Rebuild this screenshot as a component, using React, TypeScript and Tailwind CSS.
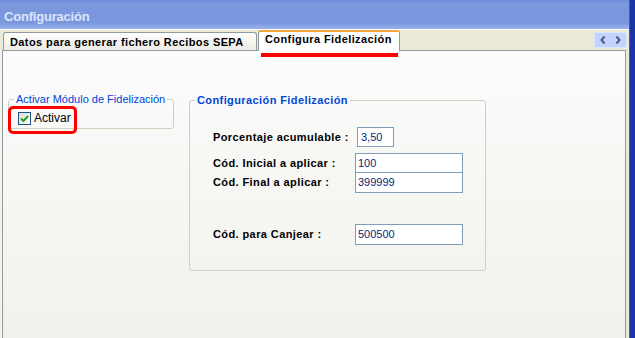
import React from "react";

const labelCls = "w-[142px] shrink-0 text-[11px] font-bold tracking-[0.4px] text-black";
const inputCls =
  "h-full border border-[#7f9db9] bg-white pl-[2px] text-[11px] leading-none text-[#0b1f7a] flex items-center";

function Chevron({ dir }: { dir: "left" | "right" }) {
  return (
    <svg width="6" height="8" viewBox="0 0 6 8" className="block">
      <polyline
        points={dir === "left" ? "4.5,0.5 1.5,4 4.5,7.5" : "1.5,0.5 4.5,4 1.5,7.5"}
        fill="none"
        stroke="#45598a"
        strokeWidth="2"
      />
    </svg>
  );
}

function CheckBox() {
  return (
    <div className="flex h-[13px] w-[13px] items-center justify-center border border-[#1c5180] bg-[linear-gradient(135deg,#dcdcd7,#ffffff)]">
      <svg width="9" height="9" viewBox="0 0 9 9">
        <polyline points="1,4.5 3.5,7 8,2" fill="none" stroke="#21a121" strokeWidth="2" />
      </svg>
    </div>
  );
}

function Row({ label, children, className }: { label: string; children: React.ReactNode; className?: string }) {
  return (
    <div className={"flex items-center " + (className ?? "")}>
      <span className={labelCls}>{label}</span>
      {children}
    </div>
  );
}

export default function App() {
  return (
    <div className="flex h-[338px] w-[635px] overflow-hidden bg-white font-['Liberation_Sans',Arial,sans-serif]">
      <div className="flex w-[629px] flex-col">
        {/* title bar */}
        <div className="h-[29px] bg-[linear-gradient(180deg,#6d8bdb_0%,#7b98de_12%,#7a97de_78%,#98b1ec_100%)] pl-[4px] pt-[9px]">
          <span className="block text-[13px] font-bold leading-[15px] tracking-[-0.2px] text-[#dbe5fa]">
            Configuración
          </span>
        </div>
        <div className="h-px bg-white" />

        {/* tab strip */}
        <div className="relative z-10 flex h-[20px] items-end bg-[#ece9d8]">
          <div className="ml-[3px] h-[18px] w-[254px] rounded-t-[3px] border border-b-0 border-[#919b9c] bg-[linear-gradient(180deg,#ffffff,#ecebe5)] pl-[6px] pt-[3px]">
            <span className="block text-[11px] font-bold leading-[13px] tracking-[0.4px] text-black">
              Datos para generar fichero Recibos SEPA
            </span>
          </div>
          <div className="-mb-px ml-px h-[21px] w-[142px] rounded-t-[3px] border-x border-t-2 border-x-[#919b9c] border-t-[#f2a53b] bg-white pl-[6px] pt-px">
            <span className="block text-[11px] font-bold leading-[13px] tracking-[0.4px] text-black">
              Configura Fidelización
            </span>
          </div>
          <div className="mb-[2px] ml-auto mr-[2px] flex h-[16px] w-[33px] self-end border border-[#dde6fd] bg-[#c3d3fb]">
            <div className="flex flex-1 items-center justify-center">
              <Chevron dir="left" />
            </div>
            <div className="flex flex-1 items-center justify-center">
              <Chevron dir="right" />
            </div>
          </div>
        </div>

        {/* body */}
        <div className="flex flex-1 bg-[#ece9d8]">
          <div className="w-[2px] bg-[#f4f3ef]" />
          <div className="relative flex w-[624px] items-start border-x border-t border-[#919b9c] bg-[linear-gradient(180deg,#fcfcfe_0%,#f7f7f4_40%,#f2f1ec_100%)]">
            <fieldset className="ml-[5px] mt-[42px] w-[166px] rounded-[3px] border border-[#d0d0bf] pb-[3px] pt-[6px]">
              <legend className="ml-[5px] px-[2px] text-[11px] leading-[13px] text-[#0046d5]">
                Activar Módulo de Fidelización
              </legend>
              <div className="ml-[9px] flex h-[13px] items-center gap-[3px]">
                <CheckBox />
                <span className="text-[12px] leading-[13px] text-black">Activar</span>
              </div>
            </fieldset>

            <fieldset className="ml-[15px] mt-[43px] w-[297px] rounded-[3px] border border-[#d0d0bf] pb-[25px] pl-[23px]">
              <legend className="ml-[-18px] px-[2px] text-[11px] font-bold leading-[13px] tracking-[0.4px] text-[#0046d5]">
                Configuración Fidelización
              </legend>
              <Row label="Porcentaje acumulable :" className="mt-[20px] h-[20px]">
                <div className={inputCls + " ml-[2px] w-[37px] pl-[3px]"}>3,50</div>
              </Row>
              <Row label="Cód. Inicial a aplicar :" className="mt-[6px] h-[20px]">
                <div className={inputCls + " w-[108px]"}>100</div>
              </Row>
              <Row label="Cód. Final a aplicar :" className="-mt-px h-[21px]">
                <div className={inputCls + " w-[108px]"}>399999</div>
              </Row>
              <Row label="Cód. para Canjear :" className="mt-[31px] h-[21px]">
                <div className={inputCls + " w-[108px]"}>500500</div>
              </Row>
            </fieldset>

            {/* annotations */}
            <div className="absolute left-[258px] top-[2px] h-[4px] w-[137px] bg-[#ff0000]" />
            <div className="absolute left-[5px] top-[55px] h-[28px] w-[69px] rounded-[5px] border-[3px] border-[#ff0000]" />
          </div>
          <div className="w-[3px]" />
        </div>
      </div>
      <div className="flex w-[6px]">
        <div className="w-px bg-[#4a5a9c]" />
        <div className="flex-1 bg-[#1a35a6]" />
      </div>
    </div>
  );
}
